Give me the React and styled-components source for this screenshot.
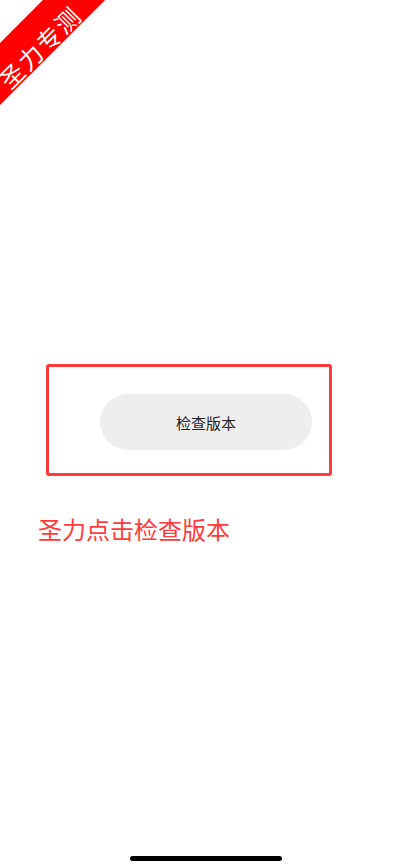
import React from "react";
import styled, { createGlobalStyle } from "styled-components";

const GlobalStyle = createGlobalStyle`
  html, body {
    margin: 0;
    padding: 0;
    background: #fff;
  }
  body {
    font-family: "Noto Sans CJK SC", "Noto Sans", sans-serif;
  }
`;

const App = () => {
  return (
    <Page>
      <GlobalStyle />
      <Ribbon>
        <span>圣力专测</span>
      </Ribbon>
      <Content>
        <CheckBox>
          <CheckButton>检查版本</CheckButton>
        </CheckBox>
        <Hint>圣力点击检查版本</Hint>
      </Content>
      <HomeBar />
    </Page>
  );
};

export default App;

const Page = styled.div`
  position: relative;
  width: 410px;
  height: 868px;
  overflow: hidden;
  display: flex;
  flex-direction: column;
`;

const Ribbon = styled.div`
  position: absolute;
  top: 15px;
  left: -63px;
  width: 200px;
  height: 44px;
  background: #ff0000;
  transform: rotate(-45deg);
  display: flex;
  align-items: flex-end;
  justify-content: center;
  padding-right: 10px;
  box-sizing: border-box;

  span {
    color: #fff;
    font-size: 24px;
    line-height: 26px;
    letter-spacing: 2px;
  }
`;

const Content = styled.div`
  flex: 1;
  padding-top: 364px;
  padding-left: 46px;
`;

const CheckBox = styled.div`
  width: 286px;
  height: 112px;
  box-sizing: border-box;
  border: 3px solid #fd3b3b;
  border-radius: 3px;
  padding: 27px 0 0 51px;
`;

const CheckButton = styled.div`
  width: 212px;
  height: 56px;
  border-radius: 28px;
  background: #eeeeee;
  display: flex;
  align-items: center;
  justify-content: center;
  font-size: 15px;
  color: #222;
`;

const Hint = styled.div`
  margin: 36px 0 0 -8px;
  font-size: 24px;
  line-height: 34px;
  color: #ff3b3b;
`;

const HomeBar = styled.div`
  position: absolute;
  left: 130px;
  bottom: 7px;
  width: 152px;
  height: 5px;
  border-radius: 3px;
  background: #000;
`;
